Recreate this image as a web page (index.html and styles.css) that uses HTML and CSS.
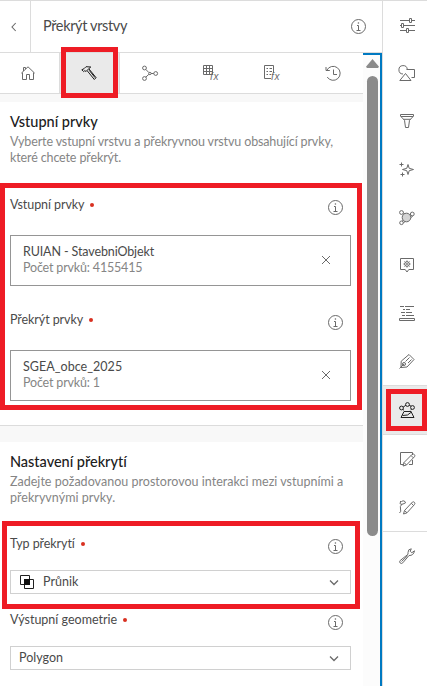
FILE: index.html
```html
<!DOCTYPE html>
<html lang="cs">
<head>
<meta charset="utf-8">
<title>Překrýt vrstvy</title>
<link rel="stylesheet" href="styles.css">
</head>
<body>
<svg class="sprite" width="0" height="0">
  <symbol id="info" viewBox="0 0 16 16"><circle cx="8.5" cy="8.5" r="7"/><path d="M7 7.500H8.500V12.500M6.500 12.500h4"/><path d="M7.800 5h1.300" stroke-width="1.3"/></symbol>
  <symbol id="close" viewBox="0 0 16 16"><path d="M4 4l8 8M12 4l-8 8"/></symbol>
  <symbol id="chevron" viewBox="0 0 16 16"><path d="M4 6.500l4 4 4-4" stroke-width="1.3"/></symbol>
</svg>
<div class="app">
  <section class="panel">
    <header class="header">
      <button class="back"><svg class="icon" viewBox="0 0 16 16"><path d="M9.700 4L6 8l3.700 4" stroke-width="1.1"/></svg></button>
      <h1>Překrýt vrstvy</h1>
      <svg class="icon"><use href="#info"/></svg>
    </header>
    <div class="body">
      <div class="main">
        <nav class="tabs">
          <a><svg class="icon" viewBox="0 0 16 16"><path d="M1.3 8.2L8 1.8l6.7 6.4M2.5 7.500v7h4v-5h3v5h4v-7M3.500 6V2.500h2v1.600"/></svg></a>
          <a class="active"><svg class="icon" viewBox="0 0 16 16"><path d="M6 5.500l1.800-1.800 7.300 9-1.800 1.800zM6 5.500L5 6.600 3.900 5.500 2.700 6.600.8 4.800 3 3.700l2-2 4.800.3-2 1.700M8.200 5.300l5.900 7.400"/></svg></a>
          <a><svg class="icon" viewBox="0 0 16 16"><circle cx="2.500" cy="3" r="1.900"/><circle cx="2.500" cy="13.500" r="1.900"/><circle cx="13.700" cy="8.500" r="1.900"/><circle cx="7.900" cy="8.500" r="1.200"/><path d="M3.800 4.400l3.100 3.200M3.800 12.100l3.100-2.800M9 8.500h2.800"/></svg></a>
          <a><svg class="icon" viewBox="0 0 16 16"><path d="M.5 .5h9v9h-9zM.5 3.500h9M.5 6.500h9M3.500 .5v9M6.500 .5v9"/><text x="7" y="15">fx</text></svg></a>
          <a><svg class="icon" viewBox="0 0 16 16"><path d="M7 13.500H.5v-13h9V8M2.500 3.500h1.500M5.500 3.500H8M2.500 6.500h1.500M5.500 6.500H8M2.500 9.500h1.500M5.500 9.500H7"/><text x="7" y="15">fx</text></svg></a>
          <a><svg class="icon" viewBox="0 0 16 16"><path d="M1.900 5.200A7 7 0 1 1 2.200 12M1 2v3.500h3.800M8.500 4.500v5H12"/></svg></a>
        </nav>
        <div class="band"></div>
        <section class="inputs">
          <h2>Vstupní prvky</h2>
          <p class="lead">Vyberte vstupní vrstvu a překryvnou vrstvu obsahující prvky,<br>které chcete překrýt.</p>
          <div class="label"><span>Vstupní prvky</span><i></i><svg class="icon"><use href="#info"/></svg></div>
          <div class="card">
            <div><div class="name">RUIAN - StavebniObjekt</div><div class="count">Počet prvků: 4155415</div></div>
            <svg class="icon"><use href="#close"/></svg>
          </div>
          <div class="label"><span>Překrýt prvky</span><i></i><svg class="icon"><use href="#info"/></svg></div>
          <div class="card">
            <div><div class="name short">SGEA_obce_2025</div><div class="count">Počet prvků: 1</div></div>
            <svg class="icon"><use href="#close"/></svg>
          </div>
        </section>
        <div class="band wide"></div>
        <section class="settings">
          <h2>Nastavení překrytí</h2>
          <p class="lead">Zadejte požadovanou prostorovou interakci mezi vstupními a<br>překryvnými prvky.</p>
          <div class="label"><span>Typ překrytí</span><i></i><svg class="icon"><use href="#info"/></svg></div>
          <div class="select">
            <svg class="overlay" viewBox="0 0 16 16"><path d="M1.500 1.500h9v9h-9zM5.500 5.500h9v9h-9z"/><path class="fill" d="M5 5h6v6H5z"/></svg>
            <span>Průnik</span><svg class="icon"><use href="#chevron"/></svg>
          </div>
          <div class="label last"><span>Výstupní geometrie</span><i></i><svg class="icon"><use href="#info"/></svg></div>
          <div class="select">
            <span>Polygon</span><svg class="icon"><use href="#chevron"/></svg>
          </div>
        </section>
      </div>
      <div class="scroll"><div class="arrow"></div><div class="thumb"></div></div>
    </div>
  </section>
  <aside class="rail">
    <a><svg class="icon" viewBox="0 0 16 16"><path d="M1 3.500h9.500M12.500 3.500H16M1 8.500h1.500M4.500 8.500H16M1 13.500h6.500M9.500 13.500H16M10.500 1.500h2v4h-2zM2.500 6.500h2v4h-2zM7.500 11.500h2v4h-2z"/></svg></a>
    <a><svg class="icon" viewBox="0 0 16 16"><path d="M4 9A4.200 4.200 0 1 1 8.300 4.500M7.500 4.500h8v8h-3M6.500 8.500l5.500 7H.8z"/></svg></a>
    <a><svg class="icon" viewBox="0 0 16 16"><path d="M1.500 1.500h13v1.600L10.500 7.300 9.500 14.500h-3L5.500 7.300 1.500 3.100zM2 3.500h12M4.500 6.300h7"/></svg></a>
    <a><svg class="icon" viewBox="0 0 16 16"><path d="M9 3.500l1.200 3.800L14.500 8.500l-4.300 1.200L9 13.500 7.800 9.700 3.500 8.500l4.300-1.200zM2.500 1.500v4M.5 3.500h4M3.500 11.500v4M1.500 13.500h4"/></svg></a>
    <a><svg class="icon" viewBox="0 0 16 16"><circle class="soft" cx="7.500" cy="8.500" r="4.300"/><circle cx="2.500" cy="3.500" r="1.900"/><circle cx="13.300" cy="5" r="1.900"/><circle cx="2.500" cy="13.800" r="1.800"/><path d="M4.200 3.800l1.500.8M10.800 5.600h1M12 8.500l1.800-1.500M3 12.200l1.300-.8M4.300 13.500L6 12.800"/></svg></a>
    <a><svg class="icon" viewBox="0 0 16 16"><path d="M1.500 1.500h13v11h-4.700L8 15l-1.800-2.500H1.500zM8 3.500V5M8 9v1.500M4.500 7H6M10 7h1.500M5.500 4.500l1 1M9.500 8.500l1 1M10.500 4.500l-1 1M6.500 8.500l-1 1"/><circle cx="8" cy="7" r="2.300"/><circle cx="8" cy="7" r=".6"/></svg></a>
    <a><svg class="icon" viewBox="0 0 16 16"><path d="M1 1.500h4M6 1.500h9M4 4.500h2M7 4.500h4M2 7.500h4M7 7.500h6M3 10.500h3M7 10.500h8M.5 13.500h15v2H.5z"/></svg></a>
    <a><svg class="icon" viewBox="0 0 16 16"><path d="M2 14.500l.2-6.300L10 1.500l5 5-7 7.500zM.5 15.500L5 11M6.500 8.500l4-4M9 10l3.500-3.500"/><circle cx="5" cy="11" r="1.500"/></svg></a>
    <a class="active"><svg class="icon" viewBox="0 0 16 16"><circle cx="2.500" cy="6" r="1.900"/><circle cx="8.500" cy="2.500" r="1.900"/><circle cx="13.500" cy="5.500" r="1.900"/><path d="M4.200 5l2.700-1.700M10.200 3.300l1.900.9M4 7.500l1 .8M12.500 7.200l-1 1M5 9.500h7l3 6H2zM3.500 13.500l5-.5 4-3"/></svg></a>
    <a><svg class="icon" viewBox="0 0 16 16"><path d="M13.500 4V1.500h-12v12h3M13.500 9v4.500H10M4 15l1-3.500 8.200-8.200q1.300-.7 2.200.3t.1 2.100L7.500 14zM5 11.500L7.500 14M12 4.500l2.300 2.300"/></svg></a>
    <a><svg class="icon" viewBox="0 0 16 16"><path d="M4.500 15l1-3.500 7.900-8.400q1.300-.7 2.100.3t0 2.100L8 13.800zM5.500 11.500L8 13.800M12.300 4.300l2.300 2.200M1 2.500h1.500Q4 1 6 2.500T4 5 1.500 3M3 5Q.5 7.500 1.500 10t-1 4"/></svg></a>
    <a class="tools"><svg class="icon" viewBox="0 0 16 16"><path d="M12.300.8Q9 1 9 4.500v1.800L1.200 12.500q-1.200 1.400 0 2.500t2.600-.2L10 7.500q4.500.3 5.500-4.700l-2.700 1.900-1.600-1.400zM2.500 13.500l6-5.700"/></svg></a>
  </aside>
  <div class="mark mark-tab"></div>
  <div class="mark mark-inputs"></div>
  <div class="mark mark-type"></div>
  <div class="mark mark-rail"></div>
</div>
</body>
</html>
```
FILE: styles.css
```css
* { box-sizing: border-box; }
body { margin: 0; background: #fff; font: 12.5px/16px Lato, "Open Sans", sans-serif; color: #4a4a4a; overflow: hidden; }
.sprite { position: absolute; }
.app { position: relative; display: flex; width: 427px; height: 686px; border-top: 1px solid #dcdcdc; overflow: hidden; }
.icon { width: 16px; height: 16px; fill: none; stroke: #6a6a6a; stroke-width: 1; flex: none; overflow: visible; }
.icon text { font: italic 10px "Liberation Sans", sans-serif; fill: #6a6a6a; stroke: none; letter-spacing: 0.8px; }
.soft { fill: #d4d4d4; }
.panel { width: 382px; display: flex; flex-direction: column; }
.header { height: 52px; flex: none; display: flex; align-items: center; border-bottom: 1px solid #dcdcdc; padding: 0 16px 1px 0; }
.back { width: 31px; height: 51px; margin-bottom: -1px; padding: 0 0 0 6px; border: 0; border-right: 1px solid #dcdcdc; background: none; display: flex; align-items: center; }
.header h1 { margin: 0 auto 0 12px; font-size: 14.5px; font-weight: 400; letter-spacing: -0.36px; line-height: 18px; }
.body { flex: 1; display: flex; min-height: 0; }
.main { width: 363px; overflow: hidden; }
.tabs { height: 41px; display: grid; grid-template-columns: repeat(6, 61px); margin-left: -2px; border-bottom: 1px solid #dcdcdc; }
.tabs a { display: flex; align-items: center; justify-content: center; padding-right: 1px; }
.tabs .active { background: #eaeaea; border: 1px solid #dcdcdc; border-width: 0 1px; padding-right: 2px; }
.active .icon { stroke: #202020; }
.band { height: 8px; background: #f8f8f8; }
.band.wide { height: 17px; margin-top: 24px; border-top: 1px solid #dcdcdc; }
.inputs, .settings { padding: 0 12px 0 10px; }
h2 { margin: 0; padding-top: 11px; font-size: 14.5px; line-height: 18px; font-weight: 500; color: #202020; letter-spacing: -0.02px; }
.lead { margin: 3px 0 0; color: #858585; white-space: nowrap; letter-spacing: -0.13px; }
.settings .lead { letter-spacing: 0.02px; }
.label { display: flex; align-items: center; height: 16px; margin-top: 33px; letter-spacing: -0.08px; }
.label span { position: relative; top: -2px; }
.label i { width: 4px; height: 4px; border-radius: 2px; background: #d83020; margin: -4px 0 0 6px; }
.label .icon { margin: 0 8px 0 auto; }
.settings .lead + .label { margin-top: 32px; }
.card { height: 51px; margin-top: 20px; border: 1px solid #959595; padding: 8px 16px 0 12px; display: flex; justify-content: space-between; }
.card .icon { margin-top: 8px; }
.card + .label { margin-top: 28px; }
.name { letter-spacing: -0.12px; }
.name.short { letter-spacing: 0.04px; }
.count { color: #858585; letter-spacing: -0.17px; }
.select { height: 24px; margin-top: 16px; border: 1px solid #d0d0d0; display: flex; align-items: center; padding: 0 8px; }
.select .icon { margin-left: auto; }
.overlay { width: 16px; height: 16px; margin-right: 8px; fill: none; stroke: #202020; }
.overlay .fill { fill: #101010; stroke: none; }
.label.last { margin-top: 20px; letter-spacing: 0; }
.scroll { width: 19px; border: solid #0079c1; border-width: 2px 2px 0 0; background: #fcfcfc; }
.arrow { width: 13px; height: 9px; margin: 4px 0 8px 3px; background: #8b8b8b; clip-path: polygon(50% 0, 100% 85%, 92% 100%, 8% 100%, 0 85%); }
.thumb { width: 11px; height: 460px; margin-left: 4px; border-radius: 6px; background: #8b8b8b; }
.rail { width: 45px; border-left: 1px solid #dcdcdc; }
.rail a { height: 48px; padding-left: 4px; display: flex; align-items: center; justify-content: center; }
.rail .active { height: 50px; background: #eaeaea; border: 1px solid #dcdcdc; border-width: 1px 0; }
.rail .tools { border-top: 1px solid #dcdcdc; }
.mark { position: absolute; border: 5px solid #ee1c25; }
.mark-tab { left: 61px; top: 46px; width: 57px; height: 51px; }
.mark-inputs { left: 0; top: 182px; width: 362px; height: 227px; }
.mark-type { left: 2px; top: 520px; width: 358px; height: 88px; }
.mark-rail { left: 386px; top: 388px; width: 41px; height: 42px; }
```
